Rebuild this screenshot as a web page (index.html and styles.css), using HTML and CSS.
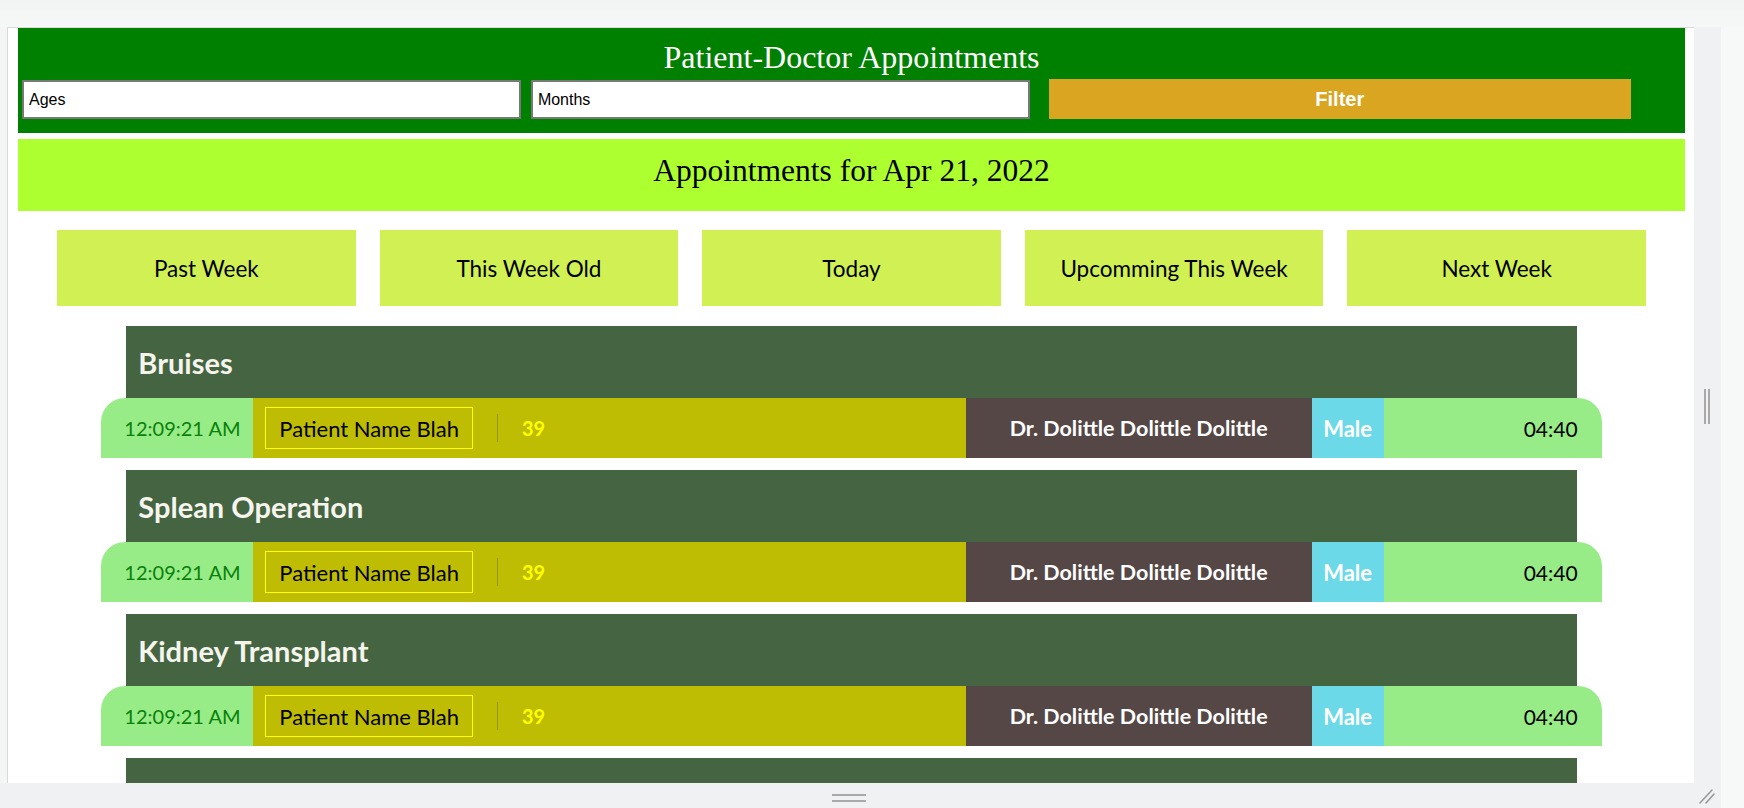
FILE: index.html
```html
<!DOCTYPE html>
<html>
<head>
<meta charset="utf-8">
<title>Patient-Doctor Appointments</title>
<link rel="stylesheet" href="styles.css">
</head>
<body>
<div class="topbar"></div>
<div class="stage">
  <div class="col">
    <div class="frame">
      <div class="app">
        <header class="top">
          <h1 class="title">Patient-Doctor Appointments</h1>
          <div class="filters">
            <input class="field" type="text" value="Ages">
            <input class="field field-2" type="text" value="Months">
            <button class="filter-btn">Filter</button>
          </div>
        </header>
        <div class="datebar">Appointments for Apr 21, 2022</div>
        <nav class="nav">
          <div class="nav-btn">Past Week</div>
          <div class="nav-btn">This Week Old</div>
          <div class="nav-btn">Today</div>
          <div class="nav-btn">Upcomming This Week</div>
          <div class="nav-btn">Next Week</div>
        </nav>
        <div class="sections">
          <section class="section">
            <div class="cat">Bruises</div>
            <div class="row">
              <div class="c-time">12:09:21 AM</div>
              <div class="c-patient"><span class="pname">Patient Name Blah</span><span class="divider"></span><span class="age">39</span></div>
              <div class="c-doc">Dr. Dolittle Dolittle Dolittle</div>
              <div class="c-sex">Male</div>
              <div class="c-dur">04:40</div>
            </div>
          </section>
          <section class="section">
            <div class="cat">Splean Operation</div>
            <div class="row">
              <div class="c-time">12:09:21 AM</div>
              <div class="c-patient"><span class="pname">Patient Name Blah</span><span class="divider"></span><span class="age">39</span></div>
              <div class="c-doc">Dr. Dolittle Dolittle Dolittle</div>
              <div class="c-sex">Male</div>
              <div class="c-dur">04:40</div>
            </div>
          </section>
          <section class="section">
            <div class="cat">Kidney Transplant</div>
            <div class="row">
              <div class="c-time">12:09:21 AM</div>
              <div class="c-patient"><span class="pname">Patient Name Blah</span><span class="divider"></span><span class="age">39</span></div>
              <div class="c-doc">Dr. Dolittle Dolittle Dolittle</div>
              <div class="c-sex">Male</div>
              <div class="c-dur">04:40</div>
            </div>
          </section>
          <section class="section">
            <div class="cat"></div>
          </section>
        </div>
      </div>
    </div>
    <div class="hbar"><span class="hhandle"></span></div>
  </div>
  <div class="vbar">
    <span class="vhandle"></span>
    <svg class="resize" width="18" height="18" viewBox="0 0 18 18">
      <line x1="2" y1="16" x2="14" y2="3" stroke="#9a9a9a" stroke-width="1.6" stroke-linecap="round"/>
      <line x1="8" y1="16" x2="16" y2="7" stroke="#9a9a9a" stroke-width="1.6" stroke-linecap="round"/>
    </svg>
  </div>
  <div class="rest"></div>
</div>
</body>
</html>
```

FILE: styles.css
```css
* { box-sizing: border-box; }
html, body { margin: 0; padding: 0; }
body {
  width: 1744px;
  height: 808px;
  overflow: hidden;
  background: #f4f5f5;
  font-family: "Liberation Sans", Arial, sans-serif;
}
.topbar {
  height: 27px;
  background: linear-gradient(#f2f3f3, #f6f7f7);
}
.stage {
  display: flex;
  height: 781px;
}
.col {
  width: 1694px;
  padding-left: 7px;
  display: flex;
  flex-direction: column;
}
.frame {
  height: 756px;
  background: #fff;
  border-top: 1px solid #d9d9d9;
  border-left: 1px solid #d9d9d9;
  overflow: hidden;
}
.hbar {
  flex: 1;
  background: #f0f1f3;
  margin-left: -7px;
  display: flex;
  justify-content: center;
  padding-top: 11px;
}
.hhandle {
  width: 34px;
  height: 8px;
  border-top: 2px solid #a9a9a9;
  border-bottom: 2px solid #a9a9a9;
  margin-left: 3px;
}
.vbar {
  width: 27px;
  background: #f0f1f3;
  position: relative;
}
.vhandle {
  position: absolute;
  left: 10px;
  top: 362px;
  width: 6px;
  height: 35px;
  border-left: 2px solid #a9a9a9;
  border-right: 2px solid #a9a9a9;
}
.resize {
  position: absolute;
  left: 4px;
  bottom: 3px;
}
.rest {
  flex: 1;
  background: #f7f8f8;
}

/* App */
.app {
  padding: 0 9px 0 10px;
}
.top {
  background: #008000;
  height: 105px;
  padding-top: 11px;
}
.title {
  margin: 0;
  font-family: "Liberation Serif", "Times New Roman", serif;
  font-weight: normal;
  font-size: 32px;
  line-height: 37px;
  color: #fff;
  text-align: center;
}
.filters {
  display: flex;
  align-items: flex-end;
  margin-top: 3px;
  padding-left: 4px;
}
.field {
  flex: 0 0 30%;
  height: 39px;
  margin: 0 10px 0 0;
  padding: 0 0 0 5px;
  border: 2px solid #787878;
  font-family: "Liberation Sans", Arial, sans-serif;
  font-size: 16px;
  color: #000;
  background: #fff;
  outline: none;
}
.field-2 { margin-right: 19px; }
.filter-btn {
  flex: 0 0 35%;
  height: 40px;
  border: none;
  background: #daa520;
  color: #fff;
  font-family: "Liberation Sans", Arial, sans-serif;
  font-weight: bold;
  font-size: 20px;
  padding: 0;
}
.datebar {
  margin-top: 6px;
  height: 72px;
  background: #adff2f;
  display: flex;
  align-items: center;
  justify-content: center;
  font-family: "Liberation Serif", "Times New Roman", serif;
  font-size: 31.5px;
  color: #000;
  padding-bottom: 9px;
}
.nav {
  display: flex;
  gap: 24px;
  padding: 0 39px;
  margin-top: 19px;
}
.nav-btn {
  flex: 1;
  height: 76px;
  background: #d0f054;
  display: flex;
  align-items: center;
  justify-content: center;
  font-family: Lato, "Open Sans", sans-serif;
  font-size: 22.5px;
  color: #000;
}
.sections {
  margin-top: 20px;
}
.section {
  margin-bottom: 12px;
}
.cat {
  width: 87%;
  margin: 0 auto;
  height: 72px;
  background: #456441;
  color: #f5f5ee;
  display: flex;
  align-items: center;
  padding-left: 12px;
  font-family: Lato, "Open Sans", sans-serif;
  font-weight: bold;
  font-size: 29px;
}
.row {
  width: 90%;
  margin: 0 auto;
  height: 60px;
  display: flex;
  border-radius: 24px 24px 0 0;
  overflow: hidden;
  font-family: Lato, "Open Sans", sans-serif;
  font-size: 22px;
}
.c-time {
  width: 152px;
  background: #98ec88;
  color: #0a800a;
  display: flex;
  align-items: center;
  padding-left: 23px;
  font-size: 20px;
}
.c-patient {
  flex: 1;
  background: #bfbc04;
  display: flex;
  align-items: center;
  padding-left: 12px;
}
.pname {
  height: 42px;
  border: 1px solid #ffff00;
  display: flex;
  align-items: center;
  padding: 0 13px;
  color: #000;
}
.divider {
  width: 1px;
  height: 28px;
  background: #959300;
  margin: 0 24px 0 24px;
}
.age {
  color: #ffff00;
  font-weight: bold;
  font-size: 20px;
}
.c-doc {
  width: 346px;
  background: #554745;
  color: #fff;
  font-weight: bold;
  font-size: 21.5px;
  display: flex;
  align-items: center;
  justify-content: center;
}
.c-sex {
  width: 72px;
  background: #6bd9e7;
  color: #fff;
  font-weight: bold;
  display: flex;
  align-items: center;
  justify-content: center;
}
.c-dur {
  width: 218px;
  background: #98ec88;
  color: #000;
  display: flex;
  align-items: center;
  justify-content: flex-end;
  padding-right: 24px;
  font-size: 21px;
}
```
